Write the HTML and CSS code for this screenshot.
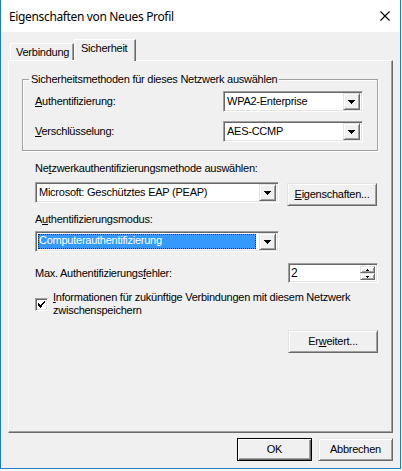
FILE: index.html
```html
<!DOCTYPE html>
<html lang="de">
<head>
<meta charset="utf-8">
<title>Eigenschaften von Neues Profil</title>
<link rel="stylesheet" href="styles.css">
</head>
<body>
<div class="window">
  <div class="titlebar">
    <span class="title">Eigenschaften von Neues Profil</span>
    <svg class="close" width="10" height="10" viewBox="0 0 10 10"><path d="M0.5 0.5 L9.5 9.5 M9.5 0.5 L0.5 9.5" stroke="#000" stroke-width="1.1" fill="none"/></svg>
  </div>
  <div class="client">
    <div class="tabs">
      <div class="tab">Verbindung</div>
      <div class="tab active">Sicherheit</div>
    </div>
    <div class="panel">
      <fieldset class="group">
        <legend>Sicherheitsmethoden für dieses Netzwerk auswählen</legend>
        <div class="grow">
          <span><u>A</u>uthentifizierung:</span>
          <div class="combo w140"><span class="val">WPA2-Enterprise</span><span class="dd"><svg width="7" height="4" viewBox="0 0 7 4" shape-rendering="crispEdges"><rect x="0" y="0" width="7" height="1"/><rect x="1" y="1" width="5" height="1"/><rect x="2" y="2" width="3" height="1"/><rect x="3" y="3" width="1" height="1"/></svg></span></div>
        </div>
        <div class="grow">
          <span><u>V</u>erschlüsselung:</span>
          <div class="combo w140"><span class="val">AES-CCMP</span><span class="dd"><svg width="7" height="4" viewBox="0 0 7 4" shape-rendering="crispEdges"><rect x="0" y="0" width="7" height="1"/><rect x="1" y="1" width="5" height="1"/><rect x="2" y="2" width="3" height="1"/><rect x="3" y="3" width="1" height="1"/></svg></span></div>
        </div>
      </fieldset>
      <div class="content">
        <div class="label l1">Ne<u>t</u>zwerkauthentifizierungsmethode auswählen:</div>
        <div class="row r1">
          <div class="combo w244"><span class="val">Microsoft: Geschütztes EAP (PEAP)</span><span class="dd"><svg width="7" height="4" viewBox="0 0 7 4" shape-rendering="crispEdges"><rect x="0" y="0" width="7" height="1"/><rect x="1" y="1" width="5" height="1"/><rect x="2" y="2" width="3" height="1"/><rect x="3" y="3" width="1" height="1"/></svg></span></div>
          <div class="btn wide b1"><u>E</u>igenschaften...</div>
        </div>
        <div class="label l2">A<u>u</u>thentifizierungsmodus:</div>
        <div class="row r2">
          <div class="combo w244"><span class="val sel">Computerauthentifizierung</span><span class="dd"><svg width="7" height="4" viewBox="0 0 7 4" shape-rendering="crispEdges"><rect x="0" y="0" width="7" height="1"/><rect x="1" y="1" width="5" height="1"/><rect x="2" y="2" width="3" height="1"/><rect x="3" y="3" width="1" height="1"/></svg></span></div>
        </div>
        <div class="row r3">
          <span>Max. Authentifizierungs<u>f</u>ehler:</span>
          <div class="spin">
            <span class="val">2</span>
            <div class="spinbtns">
              <span class="sb"><svg width="3" height="2" viewBox="0 0 3 2" shape-rendering="crispEdges"><rect x="1" y="0" width="1" height="1"/><rect x="0" y="1" width="3" height="1"/></svg></span>
              <span class="sb"><svg width="3" height="2" viewBox="0 0 3 2" shape-rendering="crispEdges"><rect x="0" y="0" width="3" height="1"/><rect x="1" y="1" width="1" height="1"/></svg></span>
            </div>
          </div>
        </div>
        <div class="row r4">
          <span class="check"><svg width="7" height="7" viewBox="0 0 7 7" shape-rendering="crispEdges"><path d="M0 2h1v1h-1zM0 3h2v1h-2zM0 4h3v1h-3zM1 5h2v1h-2zM2 6h1v1h-1zM3 3h1v2h-1zM4 2h1v2h-1zM5 1h1v2h-1zM6 0h1v2h-1zM3 5h1v1h-1z" fill="#000"/></svg></span>
          <span class="checktext"><u>I</u>nformationen für zukünftige Verbindungen mit diesem Netzwerk zwischenspeichern</span>
        </div>
        <div class="row r5">
          <div class="btn wide">Er<u>w</u>eitert...</div>
        </div>
      </div>
    </div>
    <div class="footer">
      <div class="btn ok default">OK</div>
      <div class="btn ok">Abbrechen</div>
    </div>
  </div>
</div>
</body>
</html>
```
FILE: styles.css
```css
* { box-sizing: border-box; }
body {
  margin: 0;
  background: #fff;
  font-family: "Liberation Sans", Arial, sans-serif;
  font-size: 11px;
  line-height: 13px;
  letter-spacing: -0.25px;
  color: #000;
}
u { text-decoration: underline; text-underline-offset: 1px; }
.window {
  width: 401px;
  height: 469px;
  border: 1px solid #1a7bd0;
  border-top: none;
  background: #f0f0f0;
  display: flex;
  flex-direction: column;
}
.titlebar {
  height: 32px;
  flex: none;
  background: #fff;
  display: flex;
  align-items: center;
  justify-content: space-between;
  padding: 0 10px 0 8px;
}
.title {
  font-family: "Noto Sans", sans-serif;
  font-size: 12px;
  letter-spacing: -0.35px;
  line-height: 16px;
  color: #000;
  margin-top: 1px;
}
.close { display: block; margin-top: 0; }
.client {
  flex: 1;
  padding: 7px 7px 0 7px;
  display: flex;
  flex-direction: column;
}
.tabs {
  height: 22px;
  margin-bottom: -1px;
  display: flex;
  align-items: flex-end;
  padding-left: 2px;
  position: relative;
  z-index: 1;
}
.tab {
  height: 17px;
  margin-bottom: 1px;
  width: 64px;
  border: 1px solid #fff;
  border-right: 1px solid #696969;
  border-bottom: none;
  box-shadow: inset -1px 0 0 #a0a0a0;
  padding: 2px 0 0 5px;
  background: #f0f0f0;
}
.tab.active {
  height: 22px;
  margin-bottom: 0;
  width: 62px;
  margin-left: 0;
  padding: 2px 0 0 6px;
}
.panel {
  height: 373px;
  border: 1px solid;
  border-color: #fff #696969 #696969 #fff;
  box-shadow: inset -1px -1px 0 #a0a0a0;
  padding: 12px 14px 0 13px;
}
.group {
  margin: 0;
  padding: 5px 14px 8px 6px;
  border: 1px solid #a0a0a0;
  box-shadow: inset 1px 1px 0 #fff, 1px 1px 0 #fff;
  display: flex;
  flex-direction: column;
  gap: 9px;
}
.group legend {
  padding: 0 2px;
  margin: 0;
}
.grow {
  display: flex;
  align-items: center;
  justify-content: space-between;
  padding-left: 6px;
  height: 21px;
}
.combo {
  height: 21px;
  background: #fff;
  border: 1px solid;
  border-color: #a0a0a0 #fff #fff #a0a0a0;
  box-shadow: inset 1px 1px 0 #696969, inset -1px -1px 0 #e3e3e3;
  padding: 2px;
  display: flex;
  align-items: center;
}
.w140 { width: 140px; }
.w244 { width: 244px; }
.val {
  flex: 1;
  padding-left: 1px;
  white-space: nowrap;
  overflow: hidden;
}
.val.sel {
  background: #3399ff;
  color: #fff;
  height: 15px;
  line-height: 13px;
  margin: 0 3px 0 0;
  padding-left: 1px;
  outline: 1px dotted #222;
  outline-offset: -1px;
}
.dd {
  width: 17px;
  height: 17px;
  flex: none;
  background: #f0f0f0;
  border: 1px solid;
  border-color: #e3e3e3 #696969 #696969 #e3e3e3;
  box-shadow: inset 1px 1px 0 #fff, inset -1px -1px 0 #a0a0a0;
  display: flex;
  align-items: center;
  justify-content: center;
}
.dd svg { display: block; fill: #000; margin-top: 1px; }
.content {
  padding-left: 13px;
  display: flex;
  flex-direction: column;
}
.label.l1 { margin-top: 11px; }
.row { display: flex; align-items: center; }
.r1 { margin-top: 7px; align-items: flex-start; gap: 8px; }
.b1 { margin-top: 1px; }
.label.l2 { margin-top: 7px; }
.r2 { margin-top: 5px; }
.r3 { margin-top: 11px; justify-content: space-between; height: 20px; }
.r4 { margin-top: 8px; align-items: center; gap: 5px; }
.r5 { margin-top: 13px; justify-content: flex-end; }
.btn {
  height: 23px;
  background: #f0f0f0;
  border: 1px solid;
  border-color: #e3e3e3 #696969 #696969 #e3e3e3;
  box-shadow: inset 1px 1px 0 #fff, inset -1px -1px 0 #a0a0a0;
  display: flex;
  align-items: center;
  justify-content: center;
  white-space: nowrap;
}
.btn.wide { width: 90px; }
.spin {
  width: 90px;
  height: 20px;
  background: #fff;
  border: 1px solid;
  border-color: #a0a0a0 #fff #fff #a0a0a0;
  box-shadow: inset 1px 1px 0 #696969, inset -1px -1px 0 #e3e3e3;
  padding: 2px;
  display: flex;
}
.spin .val { font-size: 12px; padding-left: 0; line-height: 15px; }
.spinbtns { width: 15px; display: flex; flex-direction: column; }
.sb {
  flex: 1;
  background: #f0f0f0;
  border: 1px solid;
  border-color: #e3e3e3 #696969 #696969 #e3e3e3;
  box-shadow: inset 1px 1px 0 #fff, inset -1px -1px 0 #a0a0a0;
  display: flex;
  align-items: center;
  justify-content: center;
}
.sb svg { display: block; fill: #000; }
.check {
  width: 13px;
  height: 13px;
  flex: none;
  background: #fff;
  border: 1px solid;
  border-color: #a0a0a0 #fff #fff #a0a0a0;
  box-shadow: inset 1px 1px 0 #696969, inset -1px -1px 0 #e3e3e3;
  display: flex;
  align-items: center;
  justify-content: center;
}
.check svg { display: block; }
.checktext { width: 318px; }
.footer {
  display: flex;
  justify-content: flex-end;
  gap: 6px;
  padding-top: 5px;
}
.btn.ok { width: 75px; }
.btn.default {
  border: 1px solid #000;
  box-shadow: inset 1px 1px 0 #fff, inset -1px -1px 0 #696969, inset -2px -2px 0 #a0a0a0;
}
```
